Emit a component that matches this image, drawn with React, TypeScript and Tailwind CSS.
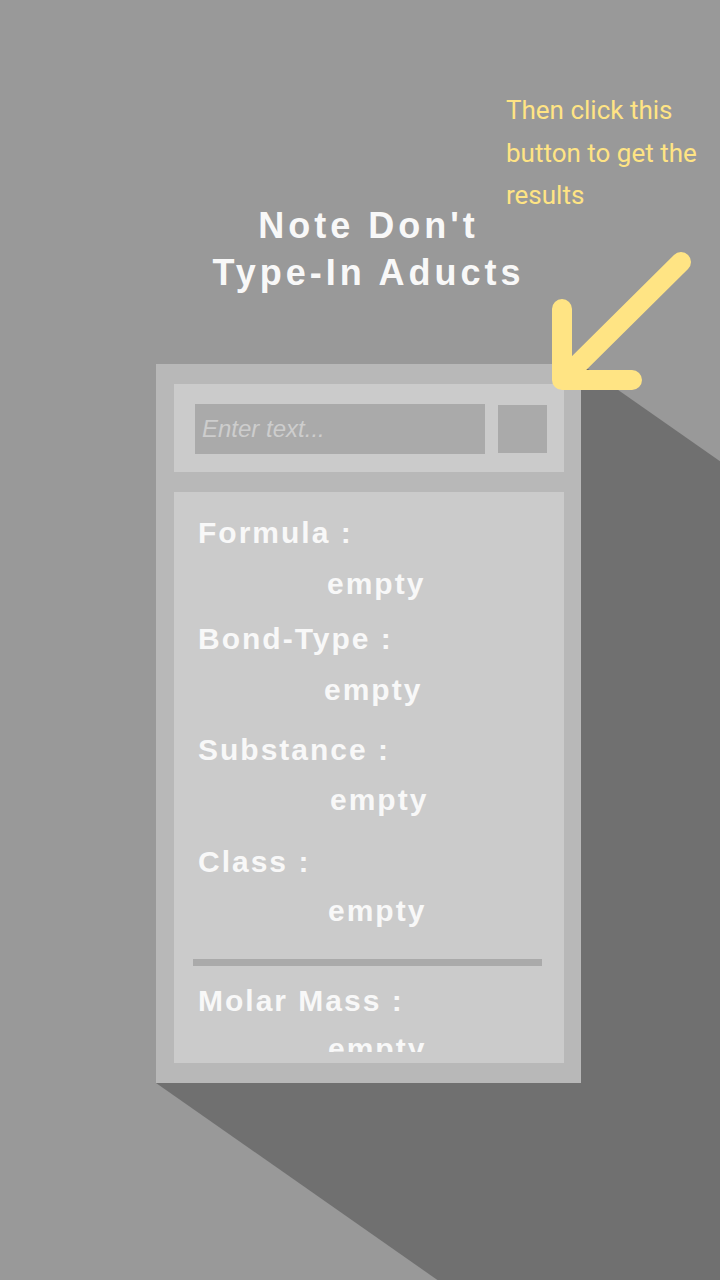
const labelCls =
  "font-['Liberation_Sans',Arial,sans-serif] font-bold text-[30px] leading-[34px] tracking-[2px] text-[#f8f8f8] whitespace-nowrap";

export default function App() {
  return (
    <div className="relative w-[720px] h-[1280px] overflow-hidden bg-[#999999]">
      {/* long shadow behind the card */}
      <svg className="absolute inset-0" width="720" height="1280" viewBox="0 0 720 1280">
        <polygon points="581,364 1581,1064 1156,1783 156,1083" fill="#707070" />
      </svg>

      <div className="relative pl-[156px] pt-[202px] flex flex-col">
        <h1 className="w-[425px] text-center font-['Liberation_Sans',Arial,sans-serif] font-bold text-[36px] leading-[47px] tracking-[4px] text-[#f8f8f8]">
          Note Don't
          <br />
          Type-In Aducts
        </h1>

        <div className="mt-[68px] w-[425px] h-[719px] bg-[#b8b8b8] pt-[20px] pb-[20px] pl-[18px] pr-[17px] flex flex-col gap-[20px]">
          <div className="h-[88px] shrink-0 bg-[#cbcbcb] pl-[21px] pr-[17px] pt-[20px] flex gap-[13px]">
            <input
              className="w-[290px] h-[50px] bg-[#aaaaaa] pl-[7px] outline-none font-['Liberation_Sans',Arial,sans-serif] text-[24px] text-[#eeeeee] placeholder:italic placeholder:text-[#cdcdcd]"
              placeholder="Enter text..."
            />
            <button className="w-[49px] h-[48px] mt-[1px] bg-[#aaaaaa]" />
          </div>

          <div className="flex-1 min-h-0 bg-[#cbcbcb] pb-[11px] flex flex-col">
            <div className="flex-1 min-h-0 overflow-hidden pt-[24px] flex flex-col">
              <div className={`${labelCls} pl-[24px]`}>Formula :</div>
              <div className={`${labelCls} pl-[153px] mt-[17px]`}>empty</div>
              <div className={`${labelCls} pl-[24px] mt-[21px]`}>Bond-Type :</div>
              <div className={`${labelCls} pl-[150px] mt-[17px]`}>empty</div>
              <div className={`${labelCls} pl-[24px] mt-[26px]`}>Substance :</div>
              <div className={`${labelCls} pl-[156px] mt-[16px]`}>empty</div>
              <div className={`${labelCls} pl-[24px] mt-[28px]`}>Class :</div>
              <div className={`${labelCls} pl-[154px] mt-[15px]`}>empty</div>
              <div className="ml-[19px] mt-[31px] w-[349px] h-[7px] shrink-0 bg-[#aaaaaa]" />
              <div className={`${labelCls} pl-[24px] mt-[18px]`}>Molar Mass :</div>
              <div className={`${labelCls} pl-[154px] mt-[14px] shrink-0`}>empty</div>
            </div>
          </div>
        </div>
      </div>

      {/* hint overlay */}
      <p className="absolute left-[506px] top-[89px] font-['Roboto',sans-serif] text-[26px] leading-[42.5px] text-[#ffe484]">
        Then click this
        <br />
        button to get the
        <br />
        results
      </p>
      <svg className="absolute inset-0 pointer-events-none" width="720" height="1280" viewBox="0 0 720 1280">
        <path
          d="M562 309 L562 380 L632 380 M681 262 L562 380"
          fill="none"
          stroke="#ffe484"
          strokeWidth={20}
          strokeLinecap="round"
          strokeLinejoin="round"
        />
      </svg>
    </div>
  );
}
